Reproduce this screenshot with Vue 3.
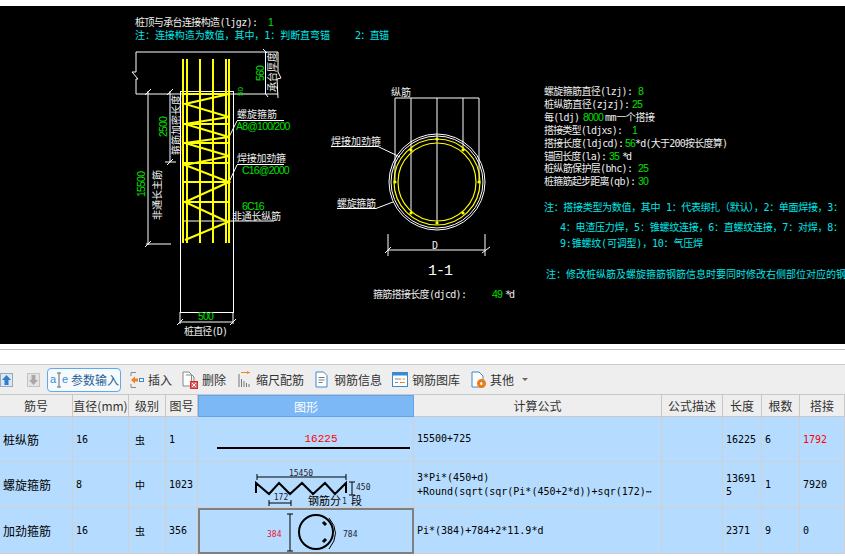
<template>
  <div class="page">
    <div class="drawing">
      <svg class="cad" viewBox="0 6 845 338" width="845" height="338">
        <!-- pile elevation -->
        <g class="white-line">
          <polyline points="136,72 136,52 278,52 278,72 281,78 277,79 278,98" />
          <polyline points="136,72 132,72 138,79 136,79 136,94 278,94" />
          <rect x="180.5" y="91.5" width="53" height="221" />
          <line x1="148" y1="91" x2="148" y2="245" />
          <line x1="170" y1="91" x2="170" y2="162" />
          <line x1="146" y1="244" x2="171" y2="244" />
          <line x1="165" y1="162" x2="176" y2="162" />
          <line x1="145" y1="95" x2="151" y2="89" />
          <line x1="167" y1="95" x2="173" y2="89" />
          <line x1="145" y1="247" x2="151" y2="241" />
          <line x1="167" y1="165" x2="173" y2="159" />
          <line x1="263" y1="49" x2="267" y2="53" />
          <line x1="265" y1="93" x2="268" y2="97" />
          <line x1="265.5" y1="52" x2="265.5" y2="94" />
          <line x1="180" y1="322" x2="233" y2="322" />
          <line x1="177" y1="325" x2="183" y2="319" />
          <line x1="230" y1="325" x2="236" y2="319" />
          <line x1="180" y1="312" x2="180" y2="324" />
          <line x1="233" y1="312" x2="233" y2="324" />
          <line x1="237" y1="120.5" x2="284" y2="120.5" />
          <line x1="229" y1="137" x2="237" y2="121" />
          <line x1="237" y1="164.5" x2="284" y2="164.5" />
          <line x1="229" y1="182" x2="237" y2="165" />
          <line x1="183" y1="221" x2="274" y2="221" />
        </g>
        <g class="rebar">
          <line v-for="x in rebarX" :key="x" :x1="x" y1="59" :x2="x" y2="243" />
          <line v-for="y in hoopY" :key="y" x1="184" :y1="y" x2="229" :y2="y" />
          <polyline points="229,94 185,104 229,117 185,124 229,137 185,143 229,156 185,165 229,182 185,202 228,222 185,240" />
        </g>

        <!-- section 1-1 -->
        <g class="white-line">
          <polyline points="395,182 395,98 479,98 479,182" />
          <line x1="411" y1="98" x2="411" y2="213" />
          <line x1="437" y1="98" x2="437" y2="223" />
          <line x1="463" y1="98" x2="463" y2="150" />
          <circle cx="437" cy="182" r="48" />
          <circle cx="437" cy="182" r="46" />
          <polyline points="331,146.5 378,146.5 400,157" />
          <polyline points="337,208.5 376,208.5 393,202" />
          <line x1="388" y1="250" x2="485" y2="250" />
          <line x1="388" y1="234" x2="388" y2="256" />
          <line x1="485" y1="234" x2="485" y2="256" />
          <line x1="385" y1="253" x2="391" y2="247" />
          <line x1="482" y1="253" x2="490" y2="247" />
        </g>
        <g class="ring">
          <circle cx="437" cy="182" r="43" />
          <circle cx="437" cy="182" r="39" />
        </g>
        <circle v-for="d in sectionDots" :key="d[0] + '-' + d[1]" :cx="d[0]" :cy="d[1]" r="1.6" fill="#ffff00" />

        <!-- labels -->
        <text class="t white" x="135" y="26" textLength="123">桩顶与承台连接构造(ljgz):</text>
        <text class="t green" x="268" y="26">1</text>
        <text class="t cyan" x="135" y="39" textLength="195">注：连接构造为数值，其中，1：判断直弯锚</text>
        <text class="t cyan" x="355" y="39" textLength="34">2：直锚</text>

        <text class="t green" transform="translate(264 81) rotate(-90)">560</text>
        <text class="t white" transform="translate(276 92) rotate(-90)">承台厚度</text>
        <text class="t green small" transform="translate(243 96) rotate(-90)">50</text>
        <text class="t green" transform="translate(167 137) rotate(-90)">2500</text>
        <text class="t white" transform="translate(180 155) rotate(-90)">箍筋加密长度</text>
        <text class="t green" transform="translate(145 197) rotate(-90)">15500</text>
        <text class="t white" transform="translate(161 220) rotate(-90)">非通长主筋</text>

        <text class="t white" x="237" y="118" textLength="40">螺旋箍筋</text>
        <text class="t green" x="236" y="130">A8@100/200</text>
        <text class="t white" x="237" y="162" textLength="49">焊接加劲箍</text>
        <text class="t green" x="242" y="174">C16@2000</text>
        <text class="t green" x="242" y="210">6C16</text>
        <text class="t white" x="232" y="220" textLength="49">非通长纵筋</text>
        <text class="t green" x="198" y="320">500</text>
        <text class="t white" x="184" y="335" textLength="44">桩直径(D)</text>

        <text class="t white" x="391" y="96">纵筋</text>
        <text class="t white" x="331" y="145">焊接加劲箍</text>
        <text class="t white" x="337" y="207" textLength="39">螺旋箍筋</text>
        <text class="t white" x="432" y="249">D</text>
        <text class="section-title" x="428" y="275">1-1</text>
        <text class="t white" x="373" y="298" textLength="94">箍筋搭接长度(djcd):</text>
        <text class="t green" x="492" y="298">49</text>
        <text class="t white" x="505" y="298" textLength="10">*d</text>

        <g v-for="(line, i) in params" :key="i">
          <text class="t white" x="544" :y="95 + i * 12.9" :textLength="line.w">{{ line.label }}</text>
          <text class="t green" :x="line.x" :y="95 + i * 12.9">{{ line.value }}</text>
          <text v-if="line.rest" class="t white" :x="line.restX" :y="95 + i * 12.9" :textLength="line.restW">{{ line.rest }}</text>
        </g>
        <text class="t cyan" x="544" y="211" textLength="299">注：搭接类型为数值，其中 1：代表绑扎（默认），2：单面焊接，3：</text>
        <text class="t cyan" x="560" y="231" textLength="283">4：电渣压力焊，5：锥螺纹连接，6：直螺纹连接，7：对焊，8：</text>
        <text class="t cyan" x="560" y="247" textLength="143">9:锥螺纹(可调型)，10：气压焊</text>
        <text class="t cyan" x="546" y="278">注：修改桩纵筋及螺旋箍筋钢筋信息时要同时修改右侧部位对应的钢</text>
      </svg>
    </div>

    <div class="blank-bar"></div>

    <div class="toolbar">
      <svg class="tool-arrow" width="13" height="14" viewBox="0 0 13 14">
        <rect x="0.5" y="0.5" width="12" height="13" fill="#dbe7f4" stroke="#9ab" />
        <path d="M6.5 2 L11 7 H8.5 V12 H4.5 V7 H2 Z" fill="#2f7fc8" />
      </svg>
      <svg class="tool-arrow down" width="13" height="14" viewBox="0 0 13 14">
        <rect x="0.5" y="0.5" width="12" height="13" fill="#e4e4e4" stroke="#c4c4c4" />
        <path d="M6.5 12 L11 7 H8.5 V2 H4.5 V7 H2 Z" fill="#a8a8a8" />
      </svg>

      <div class="param-btn">
        <svg width="20" height="16" viewBox="0 0 20 16">
          <text x="0" y="11" class="param-glyph">a</text>
          <text x="12" y="11" class="param-glyph">e</text>
          <path d="M7 1 H11 M9 1 V15 M7 15 H11" stroke="#666" fill="none" />
        </svg>
        <span>参数输入</span>
      </div>

      <div class="tool insert">
        <svg width="14" height="18" viewBox="0 0 14 18">
          <path d="M1 1.5 H6 M1 1.5 V5 M1 16.5 H6 M1 16.5 V13" stroke="#888" fill="none" />
          <path d="M1 9 L5 5.5 V7.5 H8 V10.5 H5 V12.5 Z" fill="#ee8320" />
          <rect x="9.5" y="7.5" width="4" height="3" fill="#fff" stroke="#3a8ad0" />
        </svg>
        <span>插入</span>
      </div>
      <div class="tool del">
        <svg width="16" height="18" viewBox="0 0 16 18">
          <path d="M1 1 H7 L9.5 3.5 V15 H1 Z" fill="#fff" stroke="#888" />
          <path d="M4 4 H10 L12 6 V11" fill="none" stroke="#888" />
          <rect x="8.5" y="10.5" width="7" height="7" fill="#e5605c" stroke="#c33" />
          <path d="M10 12 L14 16 M14 12 L10 16" stroke="#fff" />
        </svg>
        <span>删除</span>
      </div>
      <div class="tool scale">
        <svg width="13" height="17" viewBox="0 0 13 17">
          <path d="M3 1.5 H12" stroke="#ee8320" />
          <path d="M9 0 L12 1.5 L9 3" fill="#ee8320" />
          <path d="M1 3 V16 M3.5 8 V16 M6 10 V16 M8.5 12 V16 M11 13 V16" stroke="#777" fill="none" />
        </svg>
        <span>缩尺配筋</span>
      </div>
      <div class="tool info">
        <svg width="13" height="17" viewBox="0 0 13 17">
          <path d="M1 1 H8.5 L12 4.5 V16 H1 Z" fill="#fff" stroke="#3a8ad0" />
          <path d="M3.5 6.5 H9.5 M3.5 9 H9.5 M3.5 11.5 H7.5" stroke="#777" />
        </svg>
        <span>钢筋信息</span>
      </div>
      <div class="tool lib">
        <svg width="16" height="15" viewBox="0 0 16 15">
          <rect x="0.5" y="0.5" width="15" height="14" fill="#fff" stroke="#3a8ad0" />
          <rect x="1" y="1" width="14" height="2.5" fill="#3a8ad0" />
          <path d="M3 7 H9 M3 10.5 H6" stroke="#888" />
          <path d="M10.5 7 H13 M8 10.5 H13" stroke="#ee8320" />
        </svg>
        <span>钢筋图库</span>
      </div>
      <div class="tool other">
        <svg width="16" height="18" viewBox="0 0 16 18">
          <path d="M1 1 H8 L12 5 V16 H1 Z" fill="#fff" stroke="#3a8ad0" />
          <circle cx="10.5" cy="12.5" r="3" fill="none" stroke="#ee7a10" stroke-width="3" />
        </svg>
        <span>其他</span>
        <i class="caret"></i>
      </div>
    </div>

    <div class="grid">
      <div
        v-for="col in columns"
        :key="col"
        class="head"
        :class="{ 'head-active': col === '图形' }"
      >{{ col }}</div>

      <template v-for="row in rows" :key="row.no">
        <div class="cell cjk first">{{ row.name }}</div>
        <div class="cell num">{{ row.dia }}</div>
        <div class="cell cjk level">{{ row.level }}</div>
        <div class="cell num">{{ row.fig }}</div>
        <div class="cell shape" :class="{ selected: row.no === 3 }">
          <svg v-if="row.no === 1" viewBox="198 417 215 44" width="215" height="44">
            <text x="321" y="442" class="shape-red" text-anchor="middle">16225</text>
            <line x1="217" y1="448" x2="410" y2="448" stroke="#000" stroke-width="2" />
          </svg>
          <svg v-else-if="row.no === 2" viewBox="198 462 215 45" width="215" height="45">
            <polyline points="256,493 256,483 269,494 279,483 290,494 302,483 313,494 325,483 335,494 346,483 346,493" fill="none" stroke="#000" stroke-width="2" />
            <path d="M257 477 H346 M257 474 V480 M346 474 V480 M352 482 V495 M349 482 H355 M349 495 H355 M269 503 H291 M269 500 V506 M291 500 V506" stroke="#000" fill="none" />
            <text x="301" y="476" class="shape-dim" text-anchor="middle">15450</text>
            <text x="356" y="490" class="shape-dim">450</text>
            <text x="281" y="500" class="shape-dim" text-anchor="middle">172</text>
            <text x="308" y="505" class="shape-cjk">钢筋分</text>
            <text x="342" y="504" class="shape-dim">1</text>
            <text x="351" y="505" class="shape-cjk">段</text>
          </svg>
          <svg v-else viewBox="200 510 212 42" width="212" height="42">
            <text x="267" y="537" class="shape-dim red">384</text>
            <path d="M290 514 V551 M287 514 H293 M287 551 H293" stroke="#000" fill="none" />
            <circle cx="316" cy="532" r="17" fill="none" stroke="#000" stroke-width="2" />
            <path d="M329 518 Q342 533 329 549" fill="none" stroke="#000" />
            <path d="M323 522 L326 525 M323 542 L326 539" stroke="#000" stroke-width="3" />
            <text x="343" y="537" class="shape-dim">784</text>
          </svg>
        </div>
        <div class="cell formula">
          <span v-for="f in row.formula" :key="f">{{ f }}</span>
        </div>
        <div class="cell"></div>
        <div class="cell num wrap">{{ row.length }}</div>
        <div class="cell num">{{ row.count }}</div>
        <div class="cell num" :class="{ red: row.no === 1 }">{{ row.lap }}</div>
      </template>
    </div>
  </div>
</template>

<script setup>
const rebarX = [183, 187, 200, 213, 226, 229];
const hoopY = [94, 124, 143, 163, 182, 202];
const sectionDots = [
  [395, 182], [411, 150], [437, 139], [463, 150],
  [479, 182], [463, 213], [437, 223], [411, 213],
];

// w and restW are the widths the labels take in the drawing
const params = [
  { label: "螺旋箍筋直径(lzj):", w: 89, value: "8", x: 638 },
  { label: "桩纵筋直径(zjzj):", w: 86, value: "25", x: 632 },
  { label: "每(ldj)", w: 36, value: "8000", x: 583, rest: "mm一个搭接", restX: 605, restW: 50 },
  { label: "搭接类型(ldjxs):", w: 79, value: "1", x: 632 },
  { label: "搭接长度(ldjcd):", w: 80, value: "56", x: 625, rest: "*d(大于200按长度算)", restX: 635, restW: 93 },
  { label: "锚固长度(la):", w: 63, value: "35", x: 609, rest: "*d", restX: 622, restW: 10 },
  { label: "桩纵筋保护层(bhc):", w: 89, value: "25", x: 638 },
  { label: "桩箍筋起步距离(qb):", w: 92, value: "30", x: 638 },
];

const columns = ["筋号", "直径(mm)", "级别", "图号", "图形", "计算公式", "公式描述", "长度", "根数", "搭接"];

const rows = [
  { no: 1, name: "桩纵筋", dia: "16", level: "虫", fig: "1", formula: ["15500+725"], length: "16225", count: "6", lap: "1792" },
  { no: 2, name: "螺旋箍筋", dia: "8", level: "中", fig: "1023", formula: ["3*Pi*(450+d)", "+Round(sqrt(sqr(Pi*(450+2*d))+sqr(172)⋯"], length: "136915", count: "1", lap: "7920" },
  { no: 3, name: "加劲箍筋", dia: "16", level: "虫", fig: "356", formula: ["Pi*(384)+784+2*11.9*d"], length: "2371", count: "9", lap: "0" },
];
</script>

<style>
html,
body {
  margin: 0;
  background: #fff;
  overflow: hidden;
}
</style>

<style scoped>
.page {
  width: 845px;
  height: 556px;
  overflow: hidden;
  background: #fff;
  padding-top: 6px;
  box-sizing: border-box;
}

.drawing {
  height: 338px;
  background: #000;
}

.cad {
  display: block;
}

.white-line * {
  fill: none;
  stroke: #fff;
  stroke-width: 1;
}

.rebar * {
  fill: none;
  stroke: #ffff00;
  stroke-width: 2;
}

.ring circle {
  fill: none;
  stroke: #ffff00;
  stroke-width: 1.2;
}

.t {
  font-family: "DejaVu Sans Mono", "Noto Sans CJK SC", monospace;
  font-size: 10px;
}

.white {
  fill: #eee;
}

.green {
  font-family: "Liberation Sans", sans-serif;
  font-size: 10.5px;
  letter-spacing: -0.8px;
  fill: #00e000;
}

.cyan {
  fill: #00e8e8;
}

.small {
  font-size: 8px;
  letter-spacing: 0;
}

.section-title {
  font-family: "Liberation Mono", monospace;
  font-size: 15px;
  letter-spacing: -1px;
  fill: #fff;
}

.blank-bar {
  height: 14px;
  margin-top: 5px;
  border-top: 1px solid #bbb;
}

.toolbar {
  height: 30px;
  box-sizing: border-box;
  border-top: 1px solid #ccc;
  background: #eee;
  display: flex;
  align-items: center;
  font-family: "Noto Sans CJK SC", sans-serif;
  font-size: 12px;
  color: #333;
}

.tool-arrow {
  flex: none;
}

.tool-arrow.down {
  margin-left: 14px;
}

.param-btn {
  margin-left: 7px;
  width: 74px;
  height: 24px;
  box-sizing: border-box;
  border: 1px solid #63a8ec;
  border-radius: 4px;
  background: #f5faff;
  display: flex;
  align-items: center;
  gap: 1px;
  padding-left: 2px;
  color: #2c5f94;
  white-space: nowrap;
}

.param-glyph {
  font-family: "Liberation Sans", sans-serif;
  font-size: 11px;
  fill: #3a8ad0;
}

.tool {
  display: flex;
  align-items: center;
  white-space: nowrap;
}

.insert {
  margin-left: 9px;
  gap: 4px;
}

.del {
  margin-left: 10px;
  gap: 4px;
}

.scale {
  margin-left: 12px;
  gap: 5px;
}

.info {
  margin-left: 11px;
  gap: 6px;
}

.lib {
  margin-left: 10px;
  gap: 4px;
}

.other {
  margin-left: 11px;
  gap: 3px;
}

.caret {
  margin-left: 5px;
  border: 3px solid transparent;
  border-top: 3px solid #666;
  border-bottom: 0;
}

.grid {
  display: grid;
  grid-template-columns: 73px 56px 37px 32px 216px 248px 61px 39px 38px 45px;
  grid-template-rows: 22px 45px 46px 46px;
  border-top: 1px solid #c8c8c8;
}

.head {
  background: #eee;
  border-right: 1px solid #c8c8c8;
  border-bottom: 1px solid #c8c8c8;
  box-sizing: border-box;
  display: flex;
  align-items: center;
  justify-content: center;
  font-family: "Noto Sans CJK SC", sans-serif;
  font-size: 12px;
  color: #333;
  white-space: nowrap;
}

.head-active {
  background: #7db8f6;
  color: #fff;
  border: 1px solid #62a2ea;
}

.cell {
  background: #b5dcff;
  border-right: 1px solid #d0d0d0;
  border-bottom: 1px solid #d0d0d0;
  box-sizing: border-box;
  display: flex;
  align-items: center;
  padding-left: 3px;
  color: #000;
  font-family: "DejaVu Sans Mono", "Noto Sans CJK SC", monospace;
  font-size: 10px;
  min-width: 0;
  overflow: hidden;
}

.cjk {
  font-family: "Noto Sans CJK SC", sans-serif;
  font-size: 12px;
}

.level {
  padding-left: 6px;
  font-size: 10px;
}

.shape {
  padding: 0;
  justify-content: center;
}

.selected {
  border: 2px solid #808080;
}

.formula {
  flex-direction: column;
  align-items: flex-start;
  justify-content: center;
  gap: 2px;
  line-height: 12px;
  white-space: nowrap;
}

.wrap {
  word-break: break-all;
  line-height: 13px;
}

.red {
  color: #f00;
  fill: #f00;
}

.shape-red {
  font-family: "Liberation Mono", monospace;
  font-size: 11px;
  fill: #f00;
}

.shape-dim {
  font-family: "DejaVu Sans Mono", monospace;
  font-size: 8px;
  fill: #223;
}

.shape-dim.red {
  fill: #e8103a;
}

.shape-cjk {
  font-family: "Noto Sans CJK SC", sans-serif;
  font-size: 11px;
  fill: #000;
}
</style>
